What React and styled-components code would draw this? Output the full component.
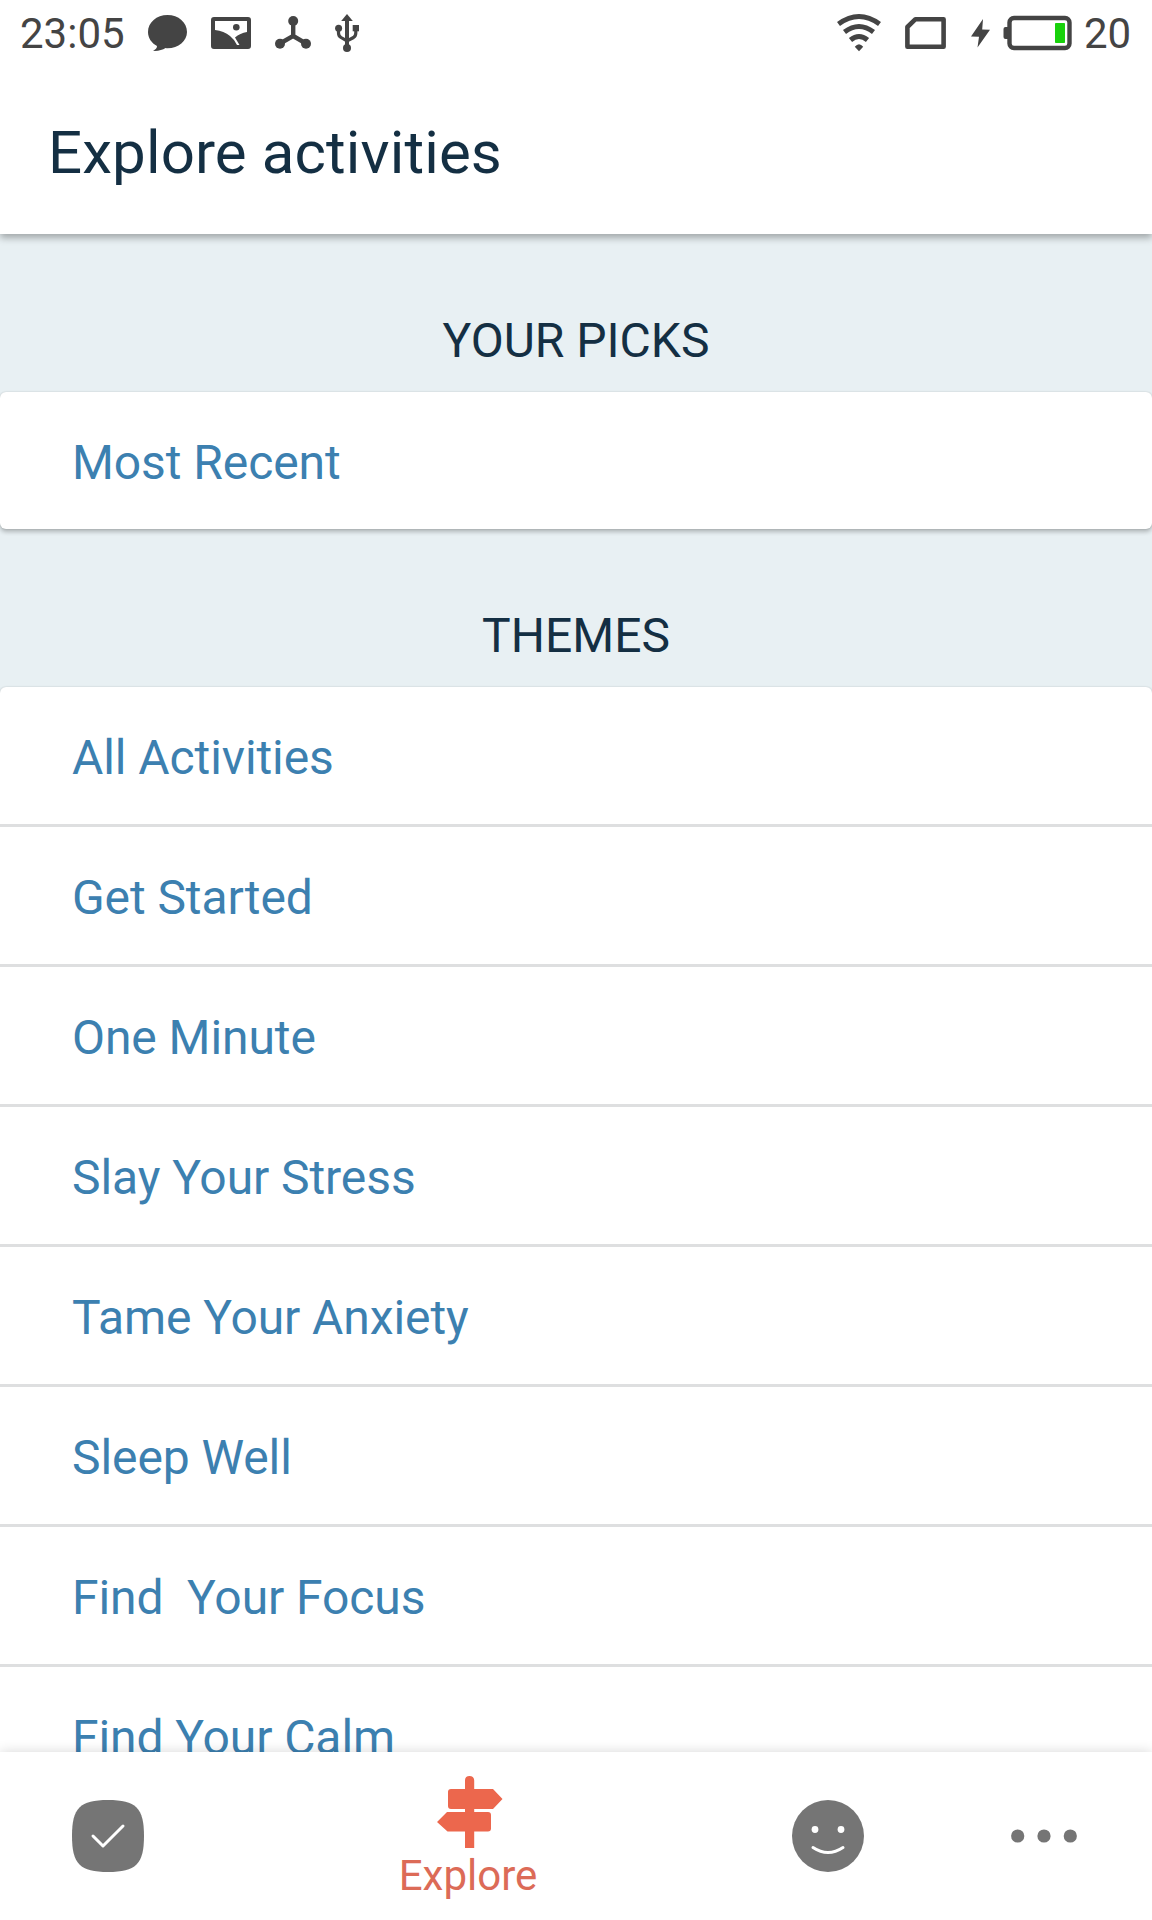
import styled, { createGlobalStyle } from 'styled-components';

const GlobalStyle = createGlobalStyle`
  * {
    box-sizing: border-box;
  }

  body {
    margin: 0;
    background: #e8f0f3;
    font-family: Roboto, 'Liberation Sans', sans-serif;
  }
`;

const Screen = styled.div`
  display: flex;
  flex-direction: column;
  width: 1152px;
  height: 1920px;
  overflow: hidden;
`;

const TopBar = styled.header`
  position: relative;
  z-index: 1;
  flex: none;
  height: 234px;
  background: #fff;
  box-shadow: 0 4px 7px rgba(0, 0, 0, 0.3);
`;

const StatusBar = styled.div`
  display: flex;
  justify-content: space-between;
  height: 66px;
  padding: 0 21px 0 20px;
  color: #444;
  font-size: 42px;
  line-height: 68px;
`;

const StatusGroup = styled.div`
  display: flex;
`;

const StatusText = styled.span`
  width: ${(props) => props.width}px;
  white-space: nowrap;
`;

const StatusIcon = styled.svg`
  flex: none;
  width: ${(props) => props.width}px;
  height: 66px;
  margin-right: ${(props) => props.$gap}px;
`;

const Title = styled.h1`
  margin: 0;
  padding: 52px 0 0 48px;
  color: #142f43;
  font-size: 60px;
  font-weight: 400;
  letter-spacing: 0.12px;
  line-height: 70px;
`;

const Content = styled.main`
  flex: 1;
  min-height: 0;
  overflow: hidden;
`;

const SectionTitle = styled.h2`
  height: 158px;
  margin: 0;
  padding-top: 79px;
  color: #142f43;
  font-size: 48px;
  font-weight: 400;
  line-height: 56px;
  text-align: center;
`;

const Card = styled.div`
  border-radius: 6px;
  background: #fff;
  box-shadow: 0 3px 4px rgba(0, 0, 0, 0.24), 0 0 2px rgba(0, 0, 0, 0.16);
`;

const Row = styled.div`
  height: 137px;
  padding: 43px 72px 0;
  color: #3c80b0;
  font-size: 48px;
  letter-spacing: -0.08px;
  line-height: 56px;
  white-space: pre;

  & + & {
    height: 140px;
    border-top: 3px solid #dedfe0;
  }
`;

const TabBar = styled.nav`
  position: relative;
  z-index: 1;
  display: flex;
  flex: none;
  height: 168px;
  background: #fff;
  box-shadow: 0 0 12px rgba(0, 0, 0, 0.16);
`;

const Tab = styled.div`
  display: flex;
  flex-direction: column;
  align-items: center;
  width: ${(props) => (props.$active ? 504 : 216)}px;
  padding-top: ${(props) => (props.$active ? 24 : 48)}px;
  color: ${(props) => (props.$active ? '#ec674d' : '#757575')};
`;

const TabIcon = styled.svg`
  flex: none;
  width: 72px;
  height: 72px;
`;

const TabLabel = styled.span`
  margin-top: 4px;
  color: #dc6b57;
  font-size: 42px;
  line-height: 48px;
`;

const themes = [
  'All Activities',
  'Get Started',
  'One Minute',
  'Slay Your Stress',
  'Tame Your Anxiety',
  'Sleep Well',
  'Find  Your Focus',
  'Find Your Calm',
];

function Status() {
  return (
    <StatusBar>
      <StatusGroup>
        <StatusText width={128}>23:05</StatusText>
        <StatusIcon width={40} $gap={23} viewBox="0 0 40 66" fill="currentColor">
          <path d="M19.5 15C8.600 15 0 22.500 0 32C0 38 3.500 43 9 46Q9 49 5 50.800C10 51.200 14.500 50 17.500 48Q18.500 48.300 19.500 48.300C30.500 48.300 39 41 39 32C39 22.500 30.500 15 19.500 15Z" />
        </StatusIcon>
        <StatusIcon width={40} $gap={24} viewBox="0 0 40 66" fill="currentColor">
          <path
            fillRule="evenodd"
            d="M3 17H37Q40 17 40 20V46Q40 49 37 49H3Q0 49 0 46V20Q0 17 3 17ZM4 21V30Q13 31 19 36Q24 40 26 45H28.500L24 37.500Q29 33 36 32V21Z"
          />
          <circle cx="25.300" cy="27.300" r="3.300" />
        </StatusIcon>
        <StatusIcon width={36} $gap={24} viewBox="0 0 36 66" fill="currentColor">
          <path d="M18.200 21V36L5 43.500M18.200 36L31 43.500" fill="none" stroke="currentColor" strokeWidth="4.400" />
          <circle cx="18.200" cy="21" r="5" />
          <circle cx="5" cy="43.800" r="5" />
          <circle cx="31" cy="43.800" r="5" />
        </StatusIcon>
        <StatusIcon width={24} $gap={0} viewBox="0 0 24 66" fill="currentColor">
          <path d="M12 20V48" fill="none" stroke="currentColor" strokeWidth="4" />
          <path d="M3.500 28V33Q3.500 36 6 37.500L12 41L18.500 37.500Q20.800 36 20.800 33V28" fill="none" stroke="currentColor" strokeWidth="3.200" />
          <path d="M12 14L17.800 21H6.200Z" />
          <circle cx="3.600" cy="28.300" r="3.500" />
          <rect x="17.700" y="25" width="6.300" height="6.300" />
          <circle cx="12" cy="48" r="4" />
        </StatusIcon>
      </StatusGroup>
      <StatusGroup>
        <StatusIcon width={44} $gap={24} viewBox="0 0 44 66" fill="none" stroke="currentColor" strokeWidth="5">
          <path d="M1.500 24Q22 9 42.500 24" />
          <path d="M7.500 32Q22 21 36.500 32" />
          <path d="M13.500 40Q22 33 30.500 40" />
          <path d="M22 51.300L17.800 46.800Q22 41.500 26.200 46.800Z" fill="currentColor" stroke="none" />
        </StatusIcon>
        <StatusIcon width={41} $gap={25} viewBox="0 0 41 66" fill="none" stroke="currentColor" strokeWidth="4.600">
          <path d="M10.500 19.200H38.600V46.700H2.400V27Z" strokeLinejoin="round" />
        </StatusIcon>
        <StatusIcon width={19} $gap={13} viewBox="0 0 19 66" fill="currentColor">
          <path d="M12 19L0 36.500L8 36.800L6.500 47.500L19 29.800L11.200 29.500Z" />
        </StatusIcon>
        <StatusIcon width={69} $gap={12} viewBox="0 0 69 66" fill="currentColor">
          <rect x="6.500" y="18" width="60" height="30" rx="4.500" fill="none" stroke="currentColor" strokeWidth="4.400" />
          <path d="M5 27V39H2.500Q0.500 39 0.500 37V29Q0.500 27 2.500 27Z" />
          <rect x="52" y="23" width="10" height="20" rx="0.800" fill="#18d10b" />
        </StatusIcon>
        <StatusText width={47}>20</StatusText>
      </StatusGroup>
    </StatusBar>
  );
}

function App() {
  return (
    <Screen>
      <GlobalStyle />

      <TopBar>
        <Status />
        <Title>Explore activities</Title>
      </TopBar>

      <Content>
        <SectionTitle>YOUR PICKS</SectionTitle>
        <Card>
          <Row>Most Recent</Row>
        </Card>

        <SectionTitle>THEMES</SectionTitle>
        <Card>
          {themes.map((theme) => (
            <Row key={theme}>{theme}</Row>
          ))}
        </Card>
      </Content>

      <TabBar>
        <Tab>
          <TabIcon viewBox="0 0 72 72" fill="currentColor">
            <path d="M36 0C64 0 72 8 72 36C72 64 64 72 36 72C8 72 0 64 0 36C0 8 8 0 36 0Z" />
            <path d="M21 36L31 46L51 26" fill="none" stroke="#fff" strokeWidth="3" strokeLinecap="round" strokeLinejoin="round" />
          </TabIcon>
        </Tab>
        <Tab $active>
          <TabIcon viewBox="0 0 72 72" fill="currentColor">
            <path d="M33 72V55.500H15.500L5 46L15 36H33V33H19Q16 33 16 30V16Q16 13 19 13H33V4.500Q33 0 37.500 0T42.200 4.500V13H61L70.500 23L61 33H42.200V36H56Q59 36 59 39V52.500Q59 55.500 56 55.500H42.200V72Z" />
          </TabIcon>
          <TabLabel>Explore</TabLabel>
        </Tab>
        <Tab>
          <TabIcon viewBox="0 0 72 72" fill="currentColor">
            <circle cx="36" cy="36" r="36" />
            <circle cx="23" cy="29.500" r="3.400" fill="#fff" />
            <circle cx="49" cy="29.500" r="3.400" fill="#fff" />
            <path d="M21 47.500Q36 57.500 51 47.500" fill="none" stroke="#fff" strokeWidth="3" strokeLinecap="round" />
          </TabIcon>
        </Tab>
        <Tab>
          <TabIcon viewBox="0 0 72 72" fill="currentColor">
            <circle cx="9.700" cy="36" r="6.600" />
            <circle cx="36" cy="36" r="6.600" />
            <circle cx="62.300" cy="36" r="6.600" />
          </TabIcon>
        </Tab>
      </TabBar>
    </Screen>
  );
}

export default App;
